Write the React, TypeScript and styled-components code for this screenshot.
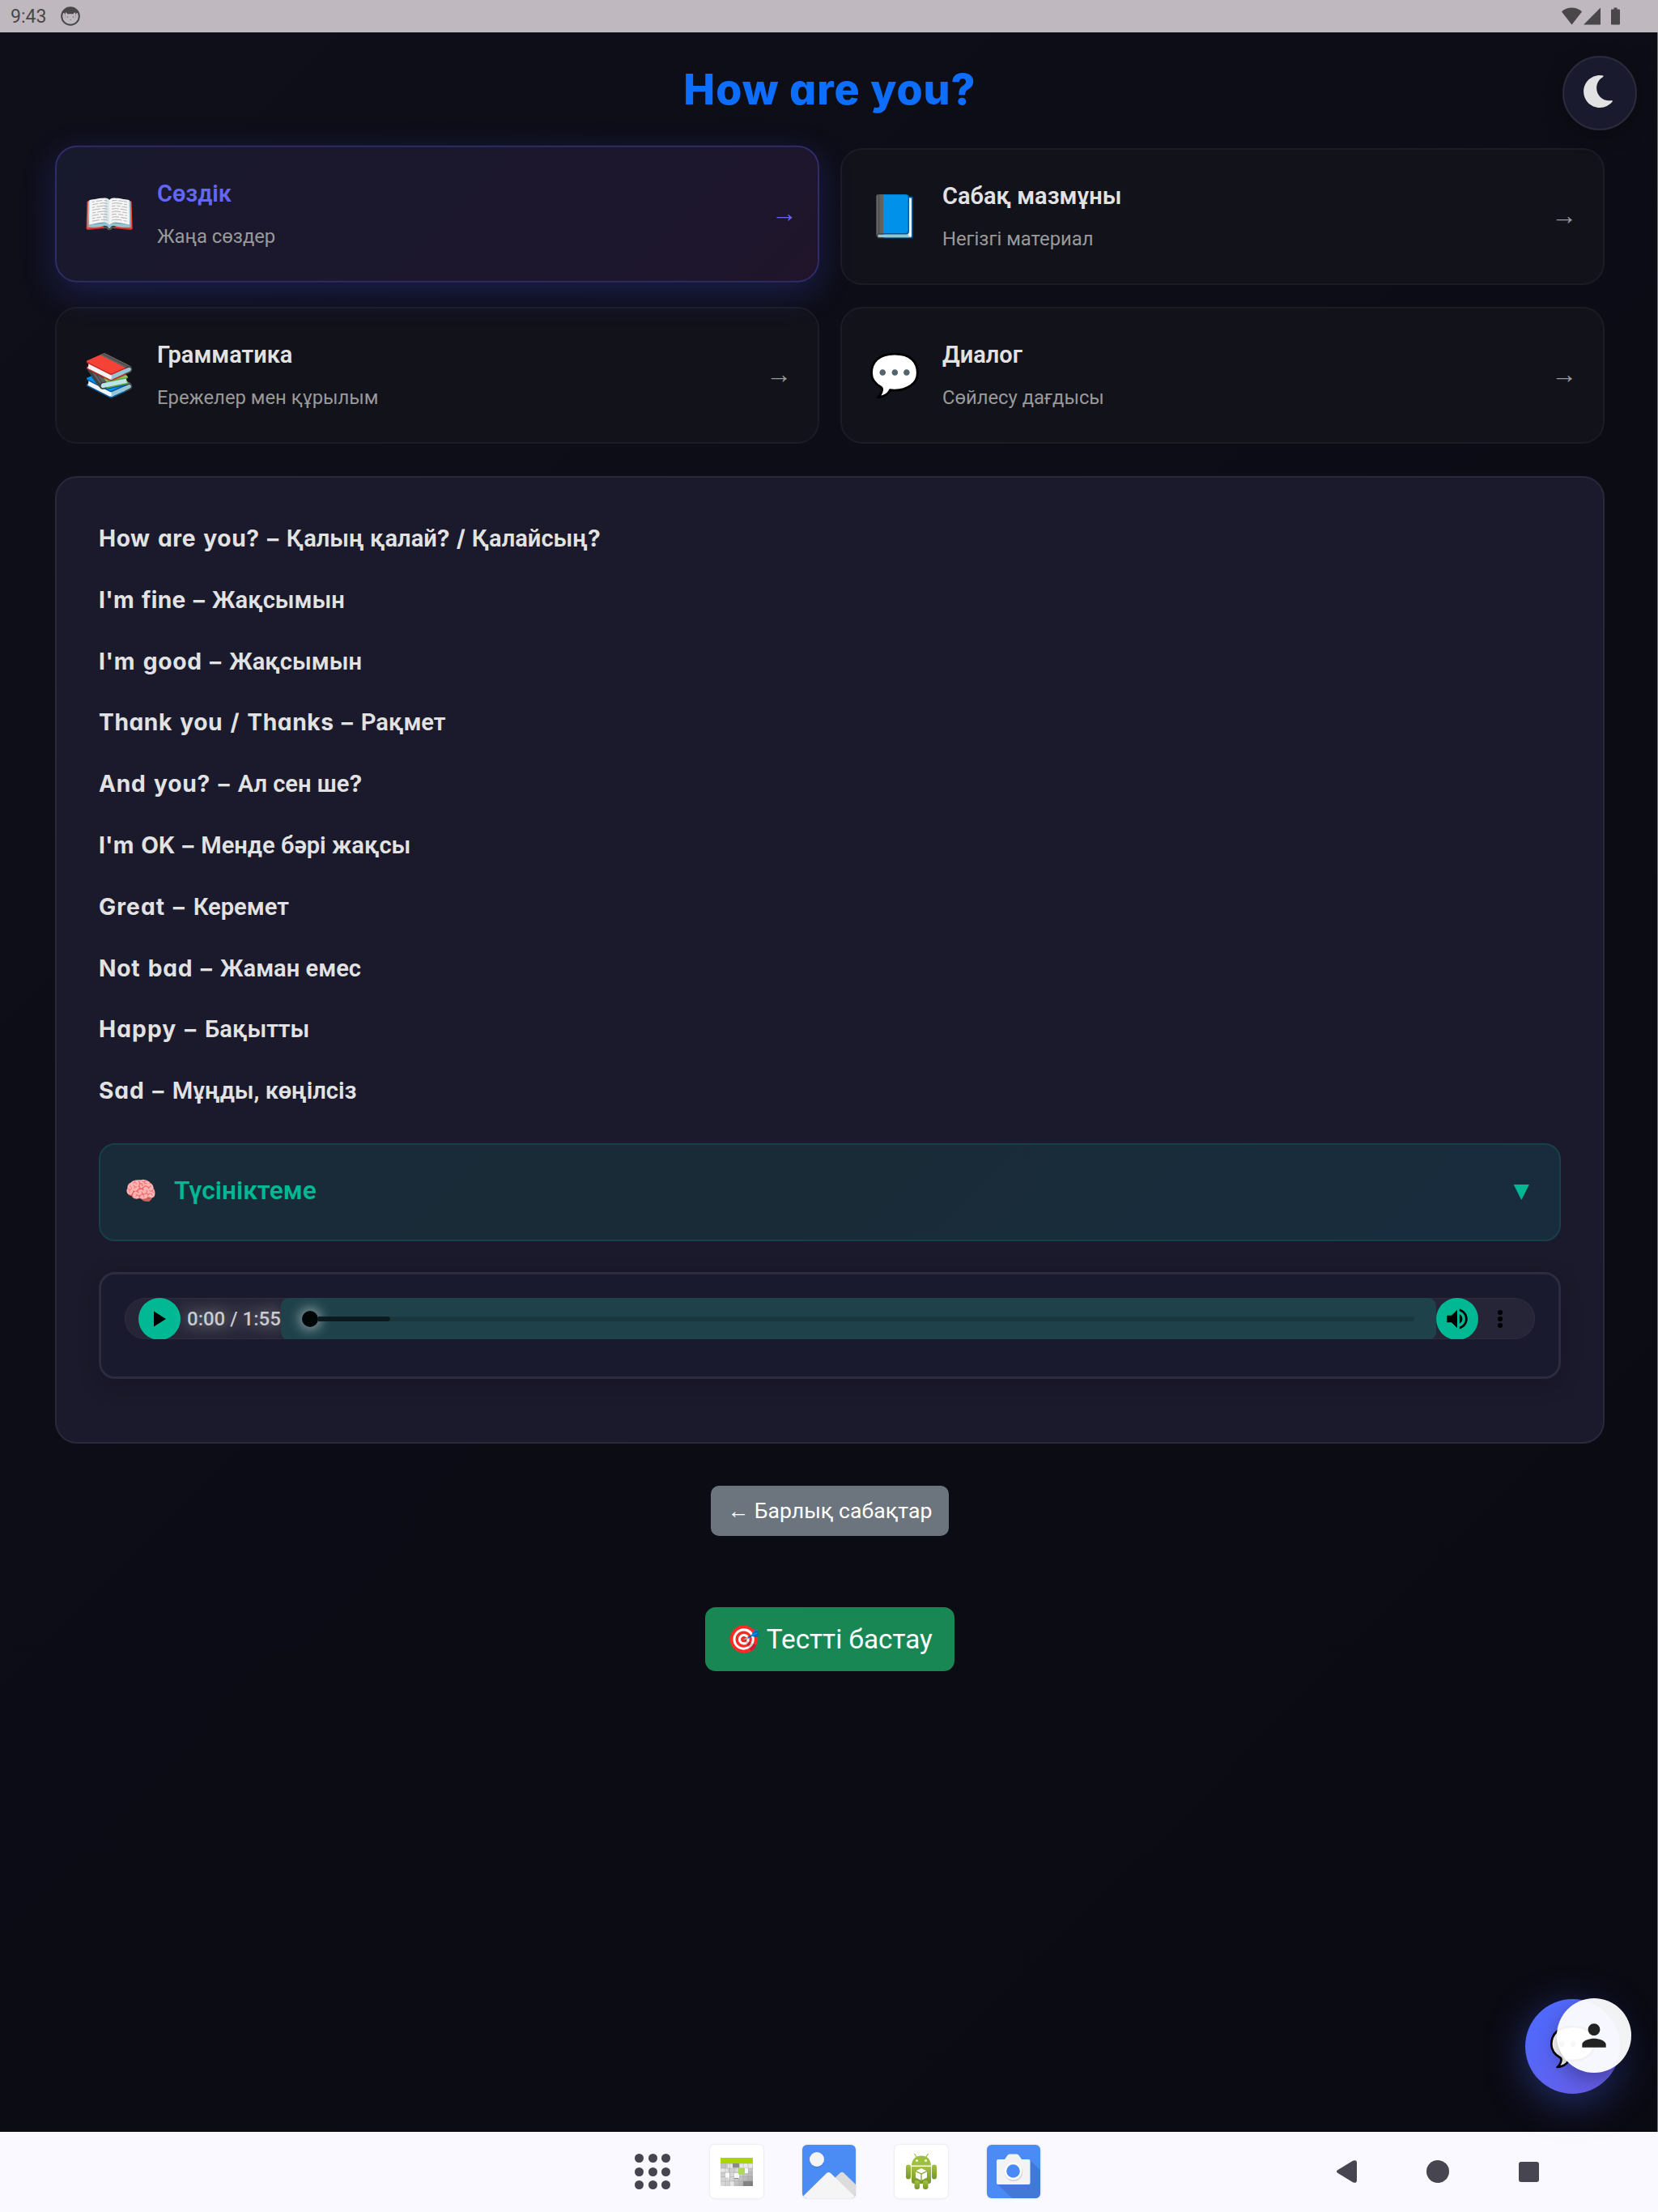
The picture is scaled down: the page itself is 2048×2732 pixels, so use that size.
import styled, { createGlobalStyle } from "styled-components";
import { FaMoon } from "react-icons/fa";
import { MdPerson, MdVolumeUp } from "react-icons/md";

interface TabType {
  icon: string;
  title: string;
  text: string;
  active?: boolean;
}
interface PartType {
  text: string;
  latin?: boolean;
  track?: number;
}

const GlobalStyle = createGlobalStyle`
  * {
    box-sizing: border-box;
  }
  body {
    margin: 0;
    font-family: Roboto, "Noto Sans", sans-serif;
    color: #e2e2e2;
    background: #0a0a12;
  }
  h1, h3, p {
    margin: 0;
  }
  button {
    font-family: inherit;
    padding: 0;
    border: none;
  }
`;

const Screen = styled.div`
  position: relative;
  width: 2048px;
  height: 2732px;
  display: flex;
  flex-direction: column;
  overflow: hidden;
`;

const StatusBar = styled.div`
  height: 40px;
  flex: none;
  padding: 0 46px 0 13px;
  display: flex;
  align-items: center;
  justify-content: space-between;
  background: #bfb9bf;
  color: #4a474a;
  font-size: 23px;
  svg {
    display: block;
  }
`;

const StatusGroup = styled.div`
  display: flex;
  align-items: center;
  gap: 18px;
`;

const Page = styled.main`
  flex: 1;
  padding: 0 65px 0 68px;
  border-right: 1px solid #77777c;
  background: linear-gradient(135deg, #0f0f1a 0%, #0a0a12 100%);
`;

const Title = styled.h1`
  height: 143px;
  padding-top: 34px;
  text-align: center;
  font-family: Inter, sans-serif;
  font-feature-settings: "cv11";
  font-weight: 800;
  font-size: 52px;
  line-height: 74px;
  letter-spacing: 1px;
  color: #0d6efd;
`;

const Tabs = styled.div`
  display: grid;
  grid-template-columns: 1fr 1fr;
  gap: 27px 26px;
  margin-bottom: 40px;
`;

const Tab = styled.div<{ $active?: boolean }>`
  height: 169px;
  padding: 0 32px 0 35px;
  display: flex;
  align-items: center;
  border-radius: 27px;
  border: 2px solid ${(p) => (p.$active ? "#2f2c68" : "#1c1c25")};
  background: ${(p) =>
    p.$active
      ? "linear-gradient(135deg, #171a2e 0%, #1a182d 18%, #1d162c 85%, #20142a 100%)"
      : "#12121b"};
  box-shadow: ${(p) =>
    p.$active ? "0 13px 42px rgba(75, 90, 255, 0.22)" : "none"};
  transform: ${(p) => (p.$active ? "translateY(-3.3px)" : "none")};
`;

const TabIcon = styled.span`
  width: 60px;
  margin-right: 29px;
  font-size: 51.5px;
  line-height: 60px;
  display: flex;
  justify-content: center;
`;

const TabBody = styled.div<{ $active?: boolean }>`
  flex: 1;
  padding-bottom: 2px;
  > h3 {
    font-size: 29px;
    font-weight: 600;
    line-height: 44px;
    color: ${(p) => (p.$active ? "#6366f1" : "#e2e2e2")};
  }
  > p {
    margin-top: 12.5px;
    font-size: 23.8px;
    line-height: 36px;
    color: #999;
  }
`;

const Arrow = styled.span<{ $active?: boolean }>`
  padding-bottom: 4px;
  font-size: 32px;
  color: ${(p) => (p.$active ? "#6366f1" : "#999")};
  transform: translateX(${(p) => (p.$active ? "6.7px" : "0")});
`;

const Panel = styled.section`
  height: 1195px;
  padding: 38px 52px;
  border: 2px solid #29293b;
  border-radius: 27px;
  background: #1a1a2c;
`;

const Phrase = styled.p`
  height: 75.8px;
  line-height: 75.8px;
  font-size: 29.1px;
  font-weight: 600;
  white-space: pre;
`;

const Latin = styled.span<{ $track?: number }>`
  font-family: Inter, sans-serif;
  font-feature-settings: "cv11";
  font-size: 28.2px;
  font-weight: 700;
  word-spacing: 2px;
  letter-spacing: ${(p) => p.$track ?? 0}px;
`;

const Explain = styled.div`
  height: 121px;
  margin-top: 26px;
  padding: 0 37px 3px 29px;
  display: flex;
  align-items: center;
  border: 2px solid #17404a;
  border-radius: 20px;
  background: linear-gradient(135deg, #192b38, #192b37 50%, #182c3e);
  color: #00b894;
  font-size: 31.7px;
  font-weight: 600;
`;

const ExplainIcon = styled.span`
  width: 42px;
  margin-right: 20px;
  font-size: 32px;
  display: flex;
  justify-content: center;
`;

const Caret = styled.span`
  margin-left: auto;
  font-family: "DejaVu Sans", sans-serif;
  font-size: 25px;
  font-weight: 400;
`;

const Player = styled.div`
  height: 132px;
  margin-top: 38px;
  padding: 29px 29px;
  border: 3px solid #2d2c3f;
  border-radius: 20px;
  background: #1a1a2e;
  box-shadow: 0 7px 25px rgba(20, 8, 20, 0.3);
`;

const Audio = styled.div`
  height: 51px;
  padding: 1px 0 0 17px;
  display: flex;
  align-items: center;
  overflow: hidden;
  border-radius: 26px;
  background: #252537;
  box-shadow: inset 0 0 0 1px #2d2d3f;
`;

const RoundBtn = styled.button`
  flex: none;
  width: 52px;
  height: 52px;
  border-radius: 50%;
  display: flex;
  align-items: center;
  justify-content: center;
  background: #00b894;
  color: #000;
`;

const Time = styled.span`
  width: 124px;
  padding-left: 8px;
  font-size: 24px;
  font-weight: 500;
  white-space: nowrap;
  color: #cbcbce;
  text-shadow: 0 0 20px rgba(255, 255, 255, 0.7);
`;

const Timeline = styled.div`
  flex: 1;
  height: 52px;
  padding: 0 27px 0 26px;
  display: flex;
  align-items: center;
  border-radius: 10px;
  background: #1f424a;
`;

const Knob = styled.div`
  width: 20px;
  height: 20px;
  border-radius: 50%;
  background: #000505;
  box-shadow: 0 0 16px 2px rgba(255, 255, 255, 0.6);
`;

const Buffered = styled.div`
  width: 89px;
  height: 6px;
  border-radius: 0 3px 3px 0;
  background: #0c1a1e;
`;

const Rest = styled.div`
  flex: 1;
  height: 6px;
  border-radius: 0 3px 3px 0;
  background: #1b373e;
`;

const More = styled.div`
  width: 70px;
  padding-left: 24px;
  display: flex;
  flex-direction: column;
  gap: 2.4px;
  > i {
    width: 6px;
    height: 6px;
    border-radius: 50%;
    background: #000;
  }
`;

const Actions = styled.div`
  padding-top: 52px;
  display: flex;
  flex-direction: column;
  align-items: center;
  gap: 88px;
`;

const BackBtn = styled.button`
  width: 294px;
  height: 62px;
  border-radius: 10px;
  background: #6c757d;
  color: #fff;
  font-size: 26.6px;
`;

const TestBtn = styled.button`
  width: 308px;
  height: 79px;
  border-radius: 13px;
  background: #198754;
  color: #fff;
  font-size: 33.3px;
`;

const ThemeBtn = styled.button`
  position: absolute;
  top: 69px;
  left: 1930px;
  width: 92px;
  height: 92px;
  padding: 0 4px 4px 0;
  border-radius: 50%;
  border: 2px solid #2a2a3c;
  background: #1a1a2e;
  color: #e2e2e2;
  display: flex;
  align-items: center;
  justify-content: center;
  box-shadow: 0 7px 25px rgba(0, 0, 0, 0.3);
`;

const ChatBtn = styled.button`
  position: absolute;
  top: 2469px;
  left: 1884px;
  width: 117px;
  height: 117px;
  border-radius: 50%;
  background: linear-gradient(135deg, #4a6cff, #6c5ce7);
  box-shadow: 0 10px 50px rgba(74, 108, 255, 0.4);
  font-size: 48px;
`;

const ProfileBtn = styled.button`
  position: absolute;
  top: 2468px;
  left: 1923px;
  width: 92px;
  height: 92px;
  border-radius: 50%;
  display: flex;
  align-items: center;
  justify-content: center;
  background: rgba(255, 255, 255, 0.95);
  color: #222;
  box-shadow: 0 10px 26px rgba(0, 0, 0, 0.3);
`;

const NavBar = styled.nav`
  height: 99px;
  flex: none;
  padding: 0 147px 1px 784px;
  display: flex;
  align-items: center;
  justify-content: space-between;
  background: #faf9ff;
`;

const Dock = styled.div`
  display: flex;
  align-items: center;
  gap: 48px;
`;

const AppGrid = styled.div`
  width: 45px;
  display: grid;
  grid-template-columns: repeat(3, 11px);
  gap: 5.5px;
  > i {
    height: 11px;
    border-radius: 50%;
    background: #474650;
  }
`;

const AppIcon = styled.div<{ $bg: string }>`
  width: 66px;
  height: 66px;
  border-radius: 6px;
  overflow: hidden;
  background: ${(p) => p.$bg};
  box-shadow: 0 0 3px rgba(0, 0, 0, 0.12);
  > svg {
    display: block;
  }
`;

const NavKeys = styled.div`
  display: flex;
  align-items: center;
  color: #474650;
  gap: 86px;
`;

const HomeKey = styled.span`
  width: 28px;
  height: 28px;
  border-radius: 50%;
  background: currentColor;
`;

const RecentKey = styled.span`
  width: 25px;
  height: 25px;
  border-radius: 3px;
  background: currentColor;
`;

const tabs: TabType[] = [
  { icon: "📖", title: "Сөздік", text: "Жаңа сөздер", active: true },
  { icon: "📘", title: "Сабақ мазмұны", text: "Негізгі материал" },
  { icon: "📚", title: "Грамматика", text: "Ережелер мен құрылым" },
  { icon: "💬", title: "Диалог", text: "Сөйлесу дағдысы" },
];

const phrases: PartType[][] = [
  [
    { text: "How are you? – ", latin: true, track: 0.58 },
    { text: "Қалың қалай" },
    { text: "? / ", latin: true, track: -0.3 },
    { text: "Қалайсың" },
    { text: "?", latin: true },
  ],
  [{ text: "I'm fine – ", latin: true, track: 0.3 }, { text: "Жақсымын" }],
  [{ text: "I'm good – ", latin: true, track: 0.7 }, { text: "Жақсымын" }],
  [
    { text: "Thank you / Thanks – ", latin: true, track: 0.58 },
    { text: "Рақмет" },
  ],
  [
    { text: "And you? – ", latin: true, track: 0.74 },
    { text: "Ал сен ше" },
    { text: "?", latin: true },
  ],
  [
    { text: "I'm OK – ", latin: true, track: 0.1 },
    { text: "Менде бәрі жақсы" },
  ],
  [{ text: "Great – ", latin: true, track: 1.05 }, { text: "Керемет" }],
  [{ text: "Not bad – ", latin: true, track: 0.75 }, { text: "Жаман емес" }],
  [{ text: "Happy – ", latin: true, track: 1.1 }, { text: "Бақытты" }],
  [{ text: "Sad – ", latin: true, track: 0.9 }, { text: "Мұңды, көңілсіз" }],
];

const CatIcon = () => (
  <svg width="24" height="24" viewBox="0 0 24 24">
    <circle cx="12" cy="12" r="10.8" fill="none" stroke="#4a474a" strokeWidth="2" />
    <path
      d="M12 1a11 11 0 0 0-9.5 6.500L5.500 9v7l0.500-9 3 2.500q3-1 6 0l3-2.500 0.500 9V9l3-1.500A11 11 0 0 0 12 1z"
      fill="#4a474a"
    />
    <circle cx="8.500" cy="13" r="1" fill="#8a868a" />
    <circle cx="15.500" cy="13" r="1" fill="#8a868a" />
    <path d="M11 16.500h2" stroke="#8a868a" />
  </svg>
);

const SignalIcons = () => (
  <svg width="73" height="22" viewBox="0 0 73 22" fill="#4a474a">
    <path d="M0 5.500Q5 0.500 12.500 0.500T25 5.500L12.500 21.500z" />
    <path d="M48 0.500v21H27z" />
    <path d="M64.500 0.500h4v2h2.500q1 0 1 1v17q0 1-1 1h-9q-1 0-1-1v-17q0-1 1-1h2.500z" />
  </svg>
);

const WidgetsIcon = () => (
  <svg width="66" height="66" viewBox="0 0 66 66">
    <defs>
      <linearGradient id="wg" x1="0" y1="0" x2="1" y2="1">
        <stop offset="0" stopColor="#b4b4b4" />
        <stop offset="0.500" stopColor="#dadada" />
        <stop offset="1" stopColor="#9c9c9c" />
      </linearGradient>
    </defs>
    <rect x="13" y="16" width="40" height="35" rx="1" fill="url(#wg)" />
    <path d="M22 24h6v5h-6zM13 29h9v5h-9zM37 24h15v5H37zM24 45h6v6h-6z" fill="#eee" opacity="0.8" />
    <path d="M28 23h8v5h-8zM30 36h5v6h-5zM41 45h12v6H41z" fill="#777" opacity="0.8" />
    <path
      d="M19 23v28M24.500 23v28M30 23v28M36 23v28M41 23v28M47 23v28M13 29h40M13 34h40M13 39.500h40M13 45h40"
      stroke="#9b9b9b"
      strokeWidth="0.400"
    />
    <path d="M19 34.500h5v6h-5zM30 35h6v6h-6zM42 29h5v6h-5z" fill="#f7f7f7" />
    <rect x="35" y="28.500" width="8" height="8" fill="#aed85a" />
    <rect x="13" y="16" width="40" height="7" rx="1" fill="#acd400" />
  </svg>
);

const GalleryIcon = () => (
  <svg width="66" height="66" viewBox="0 0 66 66">
    <circle cx="18" cy="19.500" r="9" fill="#3d75cc" opacity="0.6" />
    <circle cx="18" cy="18" r="9" fill="#f5f5f5" />
    <path d="M36 45L47 34.500q2-1.500 4 0L66 49v17H40z" fill="#dcdcdc" />
    <path d="M0 64.500L30 35q2.500-2 5 0l31 30v1H0z" fill="#f5f5f5" />
  </svg>
);

const RobotIcon = () => (
  <svg width="66" height="66" viewBox="0 0 66 66">
    <defs>
      <linearGradient id="rb" x1="0" y1="0" x2="0" y2="1">
        <stop offset="0" stopColor="#a5c33f" />
        <stop offset="1" stopColor="#75962a" />
      </linearGradient>
    </defs>
    <g fill="url(#rb)">
      <path d="M21 25.500q1-12 12-12t12 12z" fill="#9dc040" />
      <path d="M21 27h24v18q0 3-3 3H24q-3 0-3-3z" />
      <rect x="14" y="24.500" width="6" height="18" rx="3" />
      <rect x="46" y="24.500" width="6" height="18" rx="3" />
      <rect x="24.500" y="44" width="6.500" height="11" rx="3" />
      <rect x="35" y="44" width="6.500" height="11" rx="3" />
    </g>
    <path d="M27 15l-2.500-4M39 15l2.500-4" stroke="#9dc040" strokeWidth="1.200" />
    <circle cx="27.500" cy="19.500" r="1.500" fill="#fff" />
    <circle cx="38.500" cy="19.500" r="1.500" fill="#fff" />
    <path d="M33 29l7 3.500v8L33 44l-7-3.500v-8z" fill="#fff" />
    <path d="M26 32.500l7 3.500 7-3.500M33 36v8" stroke="#7f9f31" strokeWidth="1.300" fill="none" />
  </svg>
);

const CameraIcon = () => (
  <svg width="66" height="66" viewBox="0 0 66 66">
    <path d="M53 19l13 12v35H31L13 48.500z" fill="#4379d6" />
    <path
      d="M14 18h8l3.500-5q1-1.500 2.500-1.500h9q1.500 0 2.500 1.500l3.500 5h8.500q2 0 2 2v27q0 2-2 2H14q-2 0-2-2V20q0-2 2-2z"
      fill="#f3f3f3"
    />
    <circle cx="33" cy="34" r="11" fill="#cfcfcf" />
    <circle cx="32.500" cy="32.500" r="10.800" fill="#fff" />
    <circle cx="32.500" cy="32.500" r="8.300" fill="#4a8af4" />
  </svg>
);

const App = () => {
  return (
    <Screen>
      <GlobalStyle />
      <StatusBar>
        <StatusGroup>
          <span>9:43</span>
          <CatIcon />
        </StatusGroup>
        <SignalIcons />
      </StatusBar>
      <Page>
        <Title>How are you?</Title>
        <Tabs>
          {tabs.map((tab) => (
            <Tab key={tab.title} $active={tab.active}>
              <TabIcon>{tab.icon}</TabIcon>
              <TabBody $active={tab.active}>
                <h3>{tab.title}</h3>
                <p>{tab.text}</p>
              </TabBody>
              <Arrow $active={tab.active}>→</Arrow>
            </Tab>
          ))}
        </Tabs>
        <Panel>
          {phrases.map((parts, i) => (
            <Phrase key={i}>
              {parts.map((part, j) =>
                part.latin ? (
                  <Latin key={j} $track={part.track}>
                    {part.text}
                  </Latin>
                ) : (
                  part.text
                )
              )}
            </Phrase>
          ))}
          <Explain>
            <ExplainIcon>🧠</ExplainIcon>
            Түсініктеме
            <Caret>▼</Caret>
          </Explain>
          <Player>
            <Audio>
              <RoundBtn>
                <svg width="16" height="20" viewBox="0 0 16 20">
                  <path d="M1 0.5v19l15-9.5z" />
                </svg>
              </RoundBtn>
              <Time>0:00 / 1:55</Time>
              <Timeline>
                <Knob />
                <Buffered />
                <Rest />
              </Timeline>
              <RoundBtn>
                <MdVolumeUp size={34} />
              </RoundBtn>
              <More>
                <i />
                <i />
                <i />
              </More>
            </Audio>
          </Player>
        </Panel>
        <Actions>
          <BackBtn>← Барлық сабақтар</BackBtn>
          <TestBtn>🎯 Тестті бастау</TestBtn>
        </Actions>
      </Page>
      <NavBar>
        <Dock>
          <AppGrid>
            {Array.from({ length: 9 }, (_, i) => (
              <i key={i} />
            ))}
          </AppGrid>
          <AppIcon $bg="#fff">
            <WidgetsIcon />
          </AppIcon>
          <AppIcon $bg="#4b8bf4">
            <GalleryIcon />
          </AppIcon>
          <AppIcon $bg="#fff">
            <RobotIcon />
          </AppIcon>
          <AppIcon $bg="#4b8bf4">
            <CameraIcon />
          </AppIcon>
        </Dock>
        <NavKeys>
          <svg width="25" height="28" viewBox="0 0 25 28">
            <path
              d="M1.200 12.300L20 0.800q5-2 5 2.500v21.400q0 4.500-5 2.500L1.200 15.700q-2.400-1.700 0-3.400z"
              fill="currentColor"
            />
          </svg>
          <HomeKey />
          <RecentKey />
        </NavKeys>
      </NavBar>
      <ThemeBtn>
        <FaMoon size={40} />
      </ThemeBtn>
      <ChatBtn>💬</ChatBtn>
      <ProfileBtn>
        <MdPerson size={44} />
      </ProfileBtn>
    </Screen>
  );
};

export default App;
